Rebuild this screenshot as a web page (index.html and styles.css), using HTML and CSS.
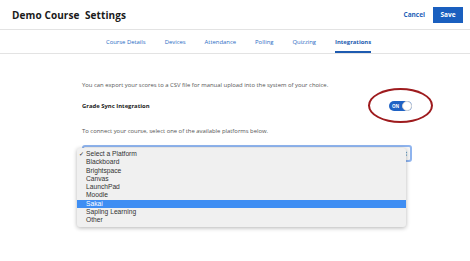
FILE: index.html
```html
<!DOCTYPE html>
<html>
<head>
<meta charset="utf-8">
<link rel="stylesheet" href="styles.css">
</head>
<body>
<header class="topbar">
  <h1 class="title">Demo Course&nbsp; Settings</h1>
  <div class="actions">
    <span class="cancel">Cancel</span>
    <span class="save">Save</span>
  </div>
</header>
<nav class="tabs">
  <span class="tab">Course Details</span>
  <span class="tab">Devices</span>
  <span class="tab">Attendance</span>
  <span class="tab">Polling</span>
  <span class="tab">Quizzing</span>
  <span class="tab active">Integrations</span>
</nav>
<main class="content">
  <p class="muted first">You can export your scores to a CSV file for manual upload into the system of your choice.</p>
  <div class="row">
    <span class="label">Grade Sync Integration</span>
    <span class="toggle-wrap">
      <span class="toggle"><span class="on">ON</span><span class="knob"></span></span>
      <span class="ring"></span>
    </span>
  </div>
  <p class="muted third">To connect your course, select one of the available platforms below.</p>
  <div class="select-wrap">
    <div class="select"><span class="arrows">&#x2195;</span></div>
    <ul class="menu">
      <li class="item"><span class="check">&#x2713;</span>Select a Platform</li>
      <li class="item">Blackboard</li>
      <li class="item">Brightspace</li>
      <li class="item">Canvas</li>
      <li class="item">LaunchPad</li>
      <li class="item">Moodle</li>
      <li class="item sel">Sakai</li>
      <li class="item">Sapling Learning</li>
      <li class="item">Other</li>
    </ul>
  </div>
</main>
</body>
</html>
```

FILE: styles.css
```css
* { box-sizing: border-box; }
body {
  margin: 0;
  width: 470px;
  height: 261px;
  background: #fff;
  font-family: "Open Sans", "Liberation Sans", sans-serif;
  color: #222;
  overflow: hidden;
}
.topbar {
  height: 30px;
  display: flex;
  align-items: center;
  justify-content: space-between;
  padding: 0 7px 0 12px;
  border-bottom: 1px solid #e3e3e3;
}
.title {
  margin: 0;
  font-size: 10px;
  font-weight: 700;
  color: #1a1a1a;
  letter-spacing: 0.1px;
}
.actions {
  display: flex;
  align-items: center;
  gap: 8px;
}
.cancel {
  font-size: 6.5px;
  font-weight: 700;
  color: #1f5fb8;
}
.save {
  width: 30px;
  height: 16px;
  background: #1a5fbf;
  color: #fff;
  font-size: 6.5px;
  font-weight: 700;
  display: flex;
  align-items: center;
  justify-content: center;
}
.tabs {
  height: 24px;
  display: flex;
  align-items: stretch;
  padding-left: 106px;
  gap: 19px;
  border-bottom: 1px solid #e3e3e3;
}
.tab {
  display: flex;
  align-items: center;
  padding-top: 3px;
  font-size: 5.9px;
  color: #2b6cc4;
  border-bottom: 2px solid transparent;
}
.tab.active {
  font-weight: 700;
  color: #1e5bb0;
  border-bottom-color: #1e5bb0;
}
.content {
  padding-left: 82px;
  font-size: 5.9px;
}
.muted {
  margin: 0;
  color: #555;
}
.first { margin-top: 27px; }
.row {
  display: flex;
  align-items: center;
  justify-content: space-between;
  width: 330px;
  height: 20px;
  margin-top: 7px;
}
.label {
  font-weight: 700;
  color: #222;
}
.toggle-wrap {
  position: relative;
  width: 23px;
  height: 10px;
}
.toggle {
  display: flex;
  align-items: center;
  width: 23px;
  height: 10px;
  border-radius: 5px;
  background: #1f62c4;
  padding-left: 3px;
}
.on {
  color: #fff;
  font-size: 4.5px;
  font-weight: 700;
}
.knob {
  position: absolute;
  right: 0;
  top: 0;
  width: 10px;
  height: 10px;
  border-radius: 50%;
  background: #fff;
  border: 1px solid #d6d6d6;
}
.ring {
  position: absolute;
  left: -21px;
  top: -13px;
  width: 65px;
  height: 35px;
  border: 2px solid #9e1b1e;
  border-radius: 50%;
}
.third { margin-top: 11px; }
.select-wrap {
  position: relative;
  margin-top: 10px;
  width: 330px;
}
.select {
  height: 17px;
  border: 2px solid #8fb4ee;
  border-radius: 3px;
  background: #f6f6f6;
  display: flex;
  justify-content: flex-end;
  align-items: center;
  padding-right: 2px;
}
.arrows {
  font-size: 6px;
  color: #333;
  font-family: "DejaVu Sans", sans-serif;
}
.menu {
  position: absolute;
  left: -5px;
  top: 3px;
  width: 329px;
  margin: 0;
  padding: 2px 0;
  list-style: none;
  background: #f0f0f0;
  border-radius: 3px;
  box-shadow: 0 1px 4px rgba(0,0,0,0.3);
  font-family: "Liberation Sans", sans-serif;
  font-size: 6.7px;
  color: #333;
}
.item {
  height: 8.3px;
  line-height: 8.3px;
  padding-left: 9px;
  position: relative;
}
.item.sel {
  background: #3f8ef3;
  color: #fff;
}
.check {
  position: absolute;
  left: 2px;
  top: 0;
  font-family: "DejaVu Sans", sans-serif;
  font-size: 6px;
  color: #222;
}
```
